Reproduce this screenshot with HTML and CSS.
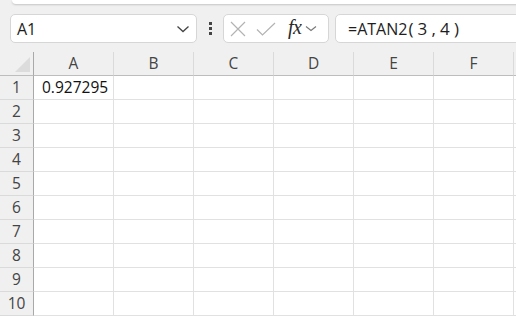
FILE: index.html
```html
<!DOCTYPE html>
<html>
<head>
<meta charset="utf-8">
<link rel="stylesheet" href="styles.css">
</head>
<body>
<div class="app">
  <div class="ribbon-edge"></div>
  <div class="formula-row">
    <div class="namebox">
      <span class="ref">A1</span>
      <svg class="chev" width="14" height="8" viewBox="0 0 14 8"><path d="M1.5 1.5 L7 6.5 L12.5 1.5" fill="none" stroke="#444" stroke-width="1.3"/></svg>
    </div>
    <div class="dots"><span></span><span></span><span></span></div>
    <div class="fxbox">
      <svg class="icon-x" width="16" height="16" viewBox="0 0 16 16"><path d="M1 1 L15 15 M15 1 L1 15" stroke="#b3b3b3" stroke-width="1.2" fill="none"/></svg>
      <svg class="icon-check" width="20" height="14" viewBox="0 0 20 14"><path d="M1 7.5 L6.5 13 L19 1" stroke="#b3b3b3" stroke-width="1.2" fill="none"/></svg>
      <span class="fx">fx</span>
      <svg class="chev-small" width="12" height="7" viewBox="0 0 12 7"><path d="M1 1.5 L6 5.5 L11 1.5" fill="none" stroke="#777" stroke-width="1.1"/></svg>
    </div>
    <div class="formula"><span class="f1">=ATAN2</span><span class="f2">(3,4)</span></div>
  </div>
  <div class="grid">
    <div class="corner"><div class="tri"></div></div>
    <div class="colh">A</div><div class="colh">B</div><div class="colh">C</div><div class="colh">D</div><div class="colh">E</div><div class="colh">F</div><div class="colh"></div>

    <div class="rowh">1</div><div class="cell num">0.927295</div><div class="cell"></div><div class="cell"></div><div class="cell"></div><div class="cell"></div><div class="cell"></div><div class="cell"></div>
    <div class="rowh">2</div><div class="cell"></div><div class="cell"></div><div class="cell"></div><div class="cell"></div><div class="cell"></div><div class="cell"></div><div class="cell"></div>
    <div class="rowh">3</div><div class="cell"></div><div class="cell"></div><div class="cell"></div><div class="cell"></div><div class="cell"></div><div class="cell"></div><div class="cell"></div>
    <div class="rowh">4</div><div class="cell"></div><div class="cell"></div><div class="cell"></div><div class="cell"></div><div class="cell"></div><div class="cell"></div><div class="cell"></div>
    <div class="rowh">5</div><div class="cell"></div><div class="cell"></div><div class="cell"></div><div class="cell"></div><div class="cell"></div><div class="cell"></div><div class="cell"></div>
    <div class="rowh">6</div><div class="cell"></div><div class="cell"></div><div class="cell"></div><div class="cell"></div><div class="cell"></div><div class="cell"></div><div class="cell"></div>
    <div class="rowh">7</div><div class="cell"></div><div class="cell"></div><div class="cell"></div><div class="cell"></div><div class="cell"></div><div class="cell"></div><div class="cell"></div>
    <div class="rowh">8</div><div class="cell"></div><div class="cell"></div><div class="cell"></div><div class="cell"></div><div class="cell"></div><div class="cell"></div><div class="cell"></div>
    <div class="rowh">9</div><div class="cell"></div><div class="cell"></div><div class="cell"></div><div class="cell"></div><div class="cell"></div><div class="cell"></div><div class="cell"></div>
    <div class="rowh">10</div><div class="cell"></div><div class="cell"></div><div class="cell"></div><div class="cell"></div><div class="cell"></div><div class="cell"></div><div class="cell"></div>
  </div>
</div>
</body>
</html>
```

FILE: styles.css
```css
* { box-sizing: border-box; }
html, body { margin: 0; padding: 0; }
body {
  width: 516px;
  height: 316px;
  overflow: hidden;
  background: #f0f0f0;
  font-family: "Open Sans", "Liberation Sans", sans-serif;
  color: #222;
}
.app { width: 516px; height: 316px; overflow: hidden; }

.ribbon-edge {
  height: 4px;
  margin-left: 12px;
  margin-right: -20px;
  background: #fff;
  border-bottom-left-radius: 6px;
  box-shadow: 0 1px 2px rgba(0,0,0,0.18);
}

.formula-row {
  display: flex;
  align-items: flex-start;
  padding: 10px 0 0 10px;
  height: 39px;
}
.namebox {
  width: 187px;
  height: 29px;
  background: #fff;
  border: 1px solid #d6d6d6;
  border-radius: 5px;
  display: flex;
  align-items: center;
  justify-content: space-between;
  padding: 0 6px 0 6px;
}
.ref { font-size: 16px; color: #1e1e1e; }
.chev { margin-top: 1px; }

.dots {
  width: 26px;
  height: 29px;
  display: flex;
  flex-direction: column;
  align-items: center;
  justify-content: center;
  gap: 2px;
}
.dots span { width: 3px; height: 3px; background: #444; }

.fxbox {
  width: 106px;
  height: 29px;
  background: #fff;
  border: 1px solid #d6d6d6;
  border-radius: 5px;
  display: flex;
  align-items: center;
  padding-left: 6px;
}
.icon-x { margin-right: 10px; }
.icon-check { margin-right: 12px; }
.fx {
  font-family: "Liberation Serif", "DejaVu Serif", serif;
  font-style: italic;
  font-size: 20px;
  color: #2a2a2a;
  margin-top: -3px;
  letter-spacing: -0.5px;
}
.chev-small { margin-left: 4px; }

.formula {
  flex: 1;
  margin-left: 6px;
  margin-right: -12px;
  height: 29px;
  background: #fff;
  border: 1px solid #d6d6d6;
  border-radius: 5px;
  display: flex;
  align-items: center;
  padding-left: 12px;
  font-size: 16px;
  color: #1e1e1e;
}
.f2 { letter-spacing: 4.2px; margin-left: 1px; font-size: 17px; }

.grid {
  margin-top: 9px;
  display: grid;
  grid-template-columns: 34px repeat(6, 80px) 40px;
  grid-auto-rows: 24px;
}
.corner {
  background: #f0f0f0;
  border-right: 1px solid #a9a9a9;
  border-bottom: 1px solid #bdbdbd;
  position: relative;
}
.tri {
  position: absolute;
  right: 3px;
  bottom: 3px;
  width: 0;
  height: 0;
  border-left: 15px solid transparent;
  border-bottom: 15px solid #dcdcdc;
}
.colh {
  background: #f0f0f0;
  border-right: 1px solid #dadada;
  border-bottom: 1px solid #bdbdbd;
  text-align: center;
  font-size: 15.5px;
  line-height: 23px;
  color: #444;
}
.rowh {
  background: #f0f0f0;
  border-right: 1px solid #a9a9a9;
  border-bottom: 1px solid #dadada;
  text-align: center;
  font-size: 15.5px;
  line-height: 23px;
  color: #444;
}
.cell {
  background: #fff;
  border-right: 1px solid #e1e1e1;
  border-bottom: 1px solid #e1e1e1;
}
.num {
  font-size: 15.5px;
  line-height: 23px;
  padding-left: 8px;
  color: #111;
}
```
